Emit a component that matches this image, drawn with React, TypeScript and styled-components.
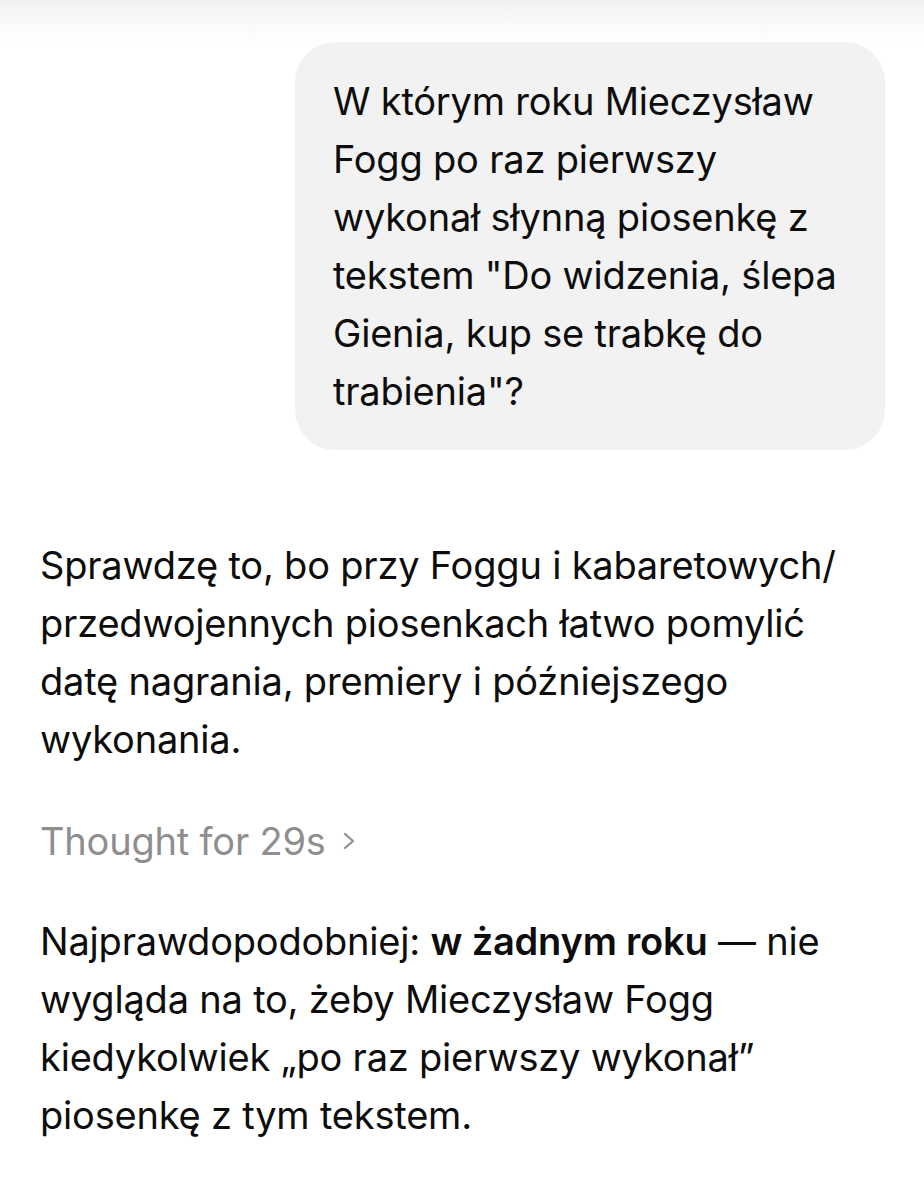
import React from "react";
import styled, { createGlobalStyle } from "styled-components";

const GlobalStyle = createGlobalStyle`
  html, body {
    margin: 0;
    padding: 0;
    background: #ffffff;
  }
  body {
    font-family: Inter, "Noto Sans", sans-serif;
    color: #0d0d0d;
    -webkit-font-smoothing: antialiased;
  }
`;

const Page = styled.div`
  width: 924px;
  min-height: 1200px;
  box-sizing: border-box;
  padding: 42px 39px 0 40px;
  display: flex;
  flex-direction: column;
  background: linear-gradient(180deg, #f1f1f1 0px, #f9f9f9 20px, #ffffff 44px);
`;

const UserRow = styled.div`
  display: flex;
  justify-content: flex-end;
`;

const Bubble = styled.div`
  width: 590px;
  box-sizing: border-box;
  padding: 30px 30px 30px 38px;
  background: #f2f2f2;
  border-radius: 40px;
  font-size: 38px;
  line-height: 58px;
  letter-spacing: -0.2px;
`;

const Paragraph = styled.p<{ $top: number }>`
  max-width: 820px;
  margin: ${(p) => p.$top}px 0 0;
  font-size: 38px;
  line-height: 58px;
  letter-spacing: -0.2px;
`;

const Strong = styled.strong`
  font-weight: 600;
`;

const ThoughtToggle = styled.button`
  margin-top: 44px;
  padding: 0;
  border: none;
  background: none;
  align-self: flex-start;
  display: flex;
  align-items: center;
  gap: 17px;
  font-family: inherit;
  font-size: 38px;
  line-height: 58px;
  letter-spacing: -0.2px;
  color: #8e8e8e;
  cursor: pointer;
`;

const Chevron = () => (
  <svg width="12" height="18" viewBox="0 0 12 18" fill="none">
    <path d="M2 2l8 7-8 7" stroke="#8e8e8e" strokeWidth="2.2" strokeLinecap="round" strokeLinejoin="round" />
  </svg>
);

export default function App() {
  return (
    <>
      <GlobalStyle />
      <Page>
        <UserRow>
          <Bubble>
            W którym roku Mieczysław Fogg po raz pierwszy wykonał słynną piosenkę z tekstem "Do widzenia, ślepa Gienia, kup se trabkę do trabienia"?
          </Bubble>
        </UserRow>
        <Paragraph $top={86}>
          Sprawdzę to, bo przy Foggu i kabaretowych/ przedwojennych piosenkach łatwo pomylić datę nagrania, premiery i późniejszego wykonania.
        </Paragraph>
        <ThoughtToggle>
          Thought for 29s
          <Chevron />
        </ThoughtToggle>
        <Paragraph $top={42}>
          Najprawdopodobniej: <Strong>w żadnym roku</Strong> — nie wygląda na to, żeby Mieczysław Fogg kiedykolwiek „po raz pierwszy wykonał” piosenkę z tym tekstem.
        </Paragraph>
      </Page>
    </>
  );
}
